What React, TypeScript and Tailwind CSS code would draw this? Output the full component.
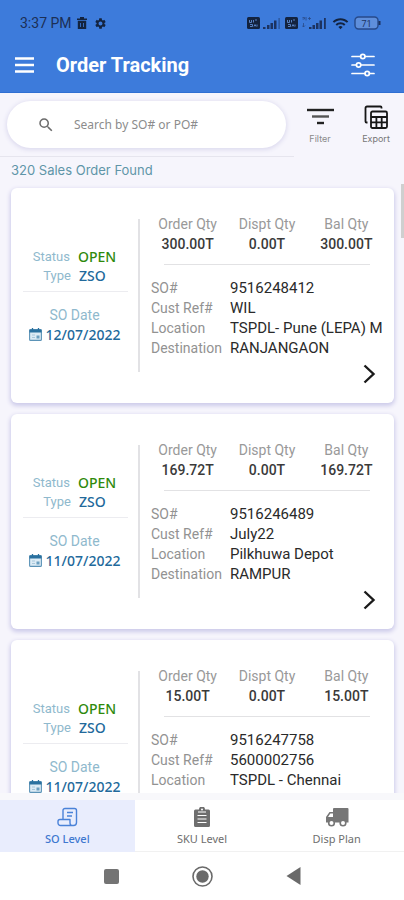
import React from 'react';
import { MdSearch, MdSettings, MdWifi } from 'react-icons/md';

const orders = [
  {
    status: 'OPEN',
    type: 'ZSO',
    date: '12/07/2022',
    orderQty: '300.00T',
    disptQty: '0.00T',
    balQty: '300.00T',
    so: '9516248412',
    custRef: 'WIL',
    location: 'TSPDL- Pune (LEPA) M',
    destination: 'RANJANGAON',
  },
  {
    status: 'OPEN',
    type: 'ZSO',
    date: '11/07/2022',
    orderQty: '169.72T',
    disptQty: '0.00T',
    balQty: '169.72T',
    so: '9516246489',
    custRef: 'July22',
    location: 'Pilkhuwa Depot',
    destination: 'RAMPUR',
  },
  {
    status: 'OPEN',
    type: 'ZSO',
    date: '11/07/2022',
    orderQty: '15.00T',
    disptQty: '0.00T',
    balQty: '15.00T',
    so: '9516247758',
    custRef: '5600002756',
    location: 'TSPDL - Chennai',
    destination: 'CHENNAI',
  },
];

type Order = (typeof orders)[number];

function SimBadge() {
  return (
    <svg className="w-[13px] h-3" viewBox="0 0 13 12">
      <rect width="13" height="12" rx="1.5" fill="#13233f" />
      <path d="M2.5 3v2.5h2V3M6.5 3v2.5M8 3h2M3 7.5h2.5v2H3M7 9.5l1-2 1 2M10 7.5v2" fill="none" stroke="#5f8bd0" strokeWidth="0.9" />
    </svg>
  );
}

function SignalBars() {
  return (
    <svg className="w-[18px] h-3" viewBox="0 0 18 12" fill="#1c3361">
      <rect x="0" y="10" width="2.5" height="2" />
      <rect x="4" y="8" width="2.5" height="4" />
      <rect x="7.5" y="6" width="2.5" height="6" />
      <rect x="11" y="3.5" width="2.5" height="8.5" />
      <rect x="15.5" y="1" width="1.2" height="11" opacity="0.6" />
    </svg>
  );
}

function StatusBar() {
  return (
    <div className="flex items-center h-[46px] pl-5 pr-[22px] text-[#1c2f55]">
      <span className="text-sm">3:37 PM</span>
      <svg className="ml-[5px] w-[10px] h-3" viewBox="0 0 10 12">
        <path d="M3 0h4v1.5h3V3H0V1.500h3zM.8 3.800h8.400V12H.8z" fill="#13233f" />
        <path d="M3.500 6v4M6.500 6v4" stroke="#3d7bdb" strokeWidth="0.8" />
      </svg>
      <MdSettings className="ml-[7px] w-[13px] h-[13px] text-[#13233f]" />
      <div className="flex items-center ml-auto">
        <SimBadge />
        <span className="ml-[3px]"><SignalBars /></span>
        <span className="ml-1"><SimBadge /></span>
        <svg className="ml-1 w-[25px] h-[14px]" viewBox="0 0 25 14" fill="#1c3361">
          <path d="M.5 1.500h2v1.500h-2M4 1v3.500M6 2.500h3M7.500 1v3M1.500 7v4M0 9.500l1.500 1.500L3 9.500" fill="none" stroke="#2a4a86" strokeWidth="0.8" />
          <rect x="7" y="11" width="2.500" height="2" />
          <rect x="10.500" y="9" width="2.500" height="4" />
          <rect x="14" y="7" width="2.500" height="6" />
          <rect x="17.500" y="4.500" width="2.500" height="8.500" />
          <rect x="22" y="2" width="1.800" height="11" />
        </svg>
        <MdWifi className="ml-1 w-[19px] h-[17px] text-[#13233f]" />
        <svg className="ml-1 w-7 h-[14px]" viewBox="0 0 28 14">
          <rect x="1" y="1" width="23" height="12" rx="3.500" fill="#5f8fdc" stroke="#274a8a" strokeWidth="1.400" />
          <path d="M25.500 5v4" stroke="#1c3361" strokeWidth="2" />
          <text x="12.500" y="10.500" textAnchor="middle" fontSize="9" fill="#1c3361">71</text>
        </svg>
      </div>
    </div>
  );
}

function SlidersIcon() {
  return (
    <svg className="w-6 h-6" viewBox="0 0 24 24" fill="none" stroke="white" strokeWidth="1.700" strokeLinecap="round">
      <path d="M1 3.500h8.500M14 3.500h9M1 12h4.500M10 12h13M1 20.500h13M18.500 20.500H23" />
      <circle cx="11.800" cy="3.500" r="2.200" />
      <circle cx="7.600" cy="12" r="2.200" />
      <circle cx="16.200" cy="20.500" r="2.200" />
    </svg>
  );
}

function ExportIcon() {
  return (
    <svg className="w-6 h-6" viewBox="0 0 24 24" fill="none" stroke="#161616" strokeWidth="1.800">
      <path d="M3.500 17.500H2.500a1 1 0 0 1-1-1V3a1.500 1.500 0 0 1 1.500-1.500h13.500a1 1 0 0 1 1 1v1" />
      <rect x="7" y="6.500" width="16" height="16.500" rx="1.500" />
      <path d="M7 12h16M7 17.400h16M12.400 12v11M17.700 12v11" />
    </svg>
  );
}

function CalendarIcon() {
  return (
    <svg className="w-[13px] h-[13px] shrink-0" viewBox="0 0 13 13">
      <rect x="0.600" y="1.600" width="11.800" height="10.800" rx="1" fill="#dcebf5" stroke="#5b93b7" strokeWidth="1.100" />
      <path d="M0.500 1.500h12V4.500h-12z" fill="#2a719f" />
      <path d="M3.500 0v2.500M9.500 0v2.500" stroke="#2a719f" strokeWidth="1.300" />
      <path d="M3 7h3M3 9.500h3" stroke="#a9c8db" />
      <rect x="7.500" y="7.500" width="3" height="3" fill="#6b9fc0" />
    </svg>
  );
}

function ScrollIcon() {
  return (
    <svg className="w-[21px] h-5" viewBox="0 0 21 20" fill="none" stroke="#4a82d8" strokeWidth="1.400" strokeLinejoin="round">
      <path d="M6 12.500V3.500a2 2 0 0 1 2-2h9.500a2 2 0 0 1 2 2v12a3 3 0 0 1-3 3H3.500a2.500 2.500 0 0 1-2.500-2.500v-1.500q0-2 2-2h10v3.500a2.500 2.500 0 0 0 3 2.500" />
      <path d="M10 5.500h6M10 9h5" />
    </svg>
  );
}

function ClipboardIcon() {
  return (
    <svg className="w-4 h-5" viewBox="0 0 16 20">
      <path d="M1.500 2.500H5a3 3 0 0 1 6 0h3.500A1.500 1.500 0 0 1 16 4v14.500a1.500 1.500 0 0 1-1.500 1.500h-13A1.500 1.500 0 0 1 0 18.500V4a1.500 1.500 0 0 1 1.500-1.500z" fill="#6e6e6e" />
      <path d="M4 5h8M3.500 8.500h9M3.500 12h9M3.500 15.500h9" stroke="white" strokeWidth="1.200" />
      <circle cx="8" cy="2.500" r="1" fill="white" />
    </svg>
  );
}

function TruckIcon() {
  return (
    <svg className="w-6 h-5" viewBox="0 0 24 20">
      <path d="M9 1h13.500a1 1 0 0 1 1 1v13.500H1V10l3.500-5H8V2a1 1 0 0 1 1-1z" fill="#767676" />
      <path d="M5.300 6.500H8V10H3z" fill="white" />
      <circle cx="6.500" cy="16" r="2.800" fill="white" stroke="#767676" strokeWidth="1.600" />
      <circle cx="18" cy="16" r="2.800" fill="white" stroke="#767676" strokeWidth="1.600" />
    </svg>
  );
}

function Qty({ label, value }: { label: string; value: string }) {
  return (
    <div className="text-center leading-5">
      <div className="text-[#999]">{label}</div>
      <div className="font-medium text-[#3a3a3a]">{value}</div>
    </div>
  );
}

function OrderCard({ order }: { order: Order }) {
  const details = [
    ['SO#', order.so],
    ['Cust Ref#', order.custRef],
    ['Location', order.location],
    ['Destination', order.destination],
  ];

  return (
    <article className="flex shrink-0 bg-white rounded-md shadow-[0_2px_4px_1px_#cdcbea] text-sm">
      <div className="flex flex-col justify-center w-[127px] shrink-0 leading-[19px]">
        <div className="flex justify-center gap-2">
          <span className="text-[13px] text-[#8fb9cd]">Status</span>
          <span className="font-['Noto_Sans',sans-serif] font-medium text-[#2f8a0c]">{order.status}</span>
        </div>
        <div className="flex justify-center gap-2">
          <span className="text-[13px] text-[#8fb9cd]">Type</span>
          <span className="font-['Noto_Sans',sans-serif] font-medium text-[#22699b]">{order.type}</span>
        </div>
        <hr className="mt-[6px] mb-[14px] ml-3 mr-2.5 border-[#ececf0]" />
        <div className="text-center text-[#8fb9cd]">SO Date</div>
        <div className="flex items-center justify-center gap-1">
          <CalendarIcon />
          <span className="font-['Noto_Sans',sans-serif] font-medium text-[#22699b]">{order.date}</span>
        </div>
      </div>
      <div className="w-0.5 my-[31px] bg-[#e2e2e5]" />
      <div className="flex flex-col flex-1 min-w-0 pt-[26px] pb-[19px] px-2">
        <div className="grid grid-cols-3">
          <Qty label="Order Qty" value={order.orderQty} />
          <Qty label="Dispt Qty" value={order.disptQty} />
          <Qty label="Bal Qty" value={order.balQty} />
        </div>
        <hr className="mt-2.5 mb-[13px] mx-4 border-[#e2e2e4]" />
        <dl className="grid grid-cols-[79px_1fr] ml-[3px] leading-5">
          {details.map(([label, value]) => (
            <React.Fragment key={label}>
              <dt className="text-[#929292]">{label}</dt>
              <dd className="text-[15px] text-[#2a2a2a] whitespace-nowrap">{value}</dd>
            </React.Fragment>
          ))}
        </dl>
        <button type="button" aria-label="Open order" className="self-end mt-1.5 mr-2.5">
          <svg className="w-[14px] h-5" viewBox="0 0 14 20" fill="none" stroke="#1a1a1a" strokeWidth="2.400">
            <path d="M2.500 1.500L11.500 10l-9 8.500" />
          </svg>
        </button>
      </div>
    </article>
  );
}

const tabs = [
  { label: 'SO Level', icon: <ScrollIcon />, active: true },
  { label: 'SKU Level', icon: <ClipboardIcon />, active: false },
  { label: 'Disp Plan', icon: <TruckIcon />, active: false },
];

export default function App() {
  return (
    <div className="flex flex-col h-screen overflow-hidden bg-[#f6f5fc] font-['Roboto',sans-serif]">
      <header className="shrink-0 bg-[#3d7bdb] border-b border-[#2f6fd2]">
        <StatusBar />
        <div className="flex items-center h-[46px] pl-[15px] pr-[29px] pb-2">
          <button type="button" aria-label="Menu">
            <svg className="w-[19px] h-4" viewBox="0 0 19 16" stroke="white" strokeWidth="2.400">
              <path d="M0 1.500h19M0 8h19M0 14.500h19" />
            </svg>
          </button>
          <h1 className="ml-[22px] text-xl font-bold text-white">Order Tracking</h1>
          <button type="button" aria-label="Settings" className="ml-auto">
            <SlidersIcon />
          </button>
        </div>
      </header>

      <div className="flex shrink-0 pl-[7px] pr-3 pt-2">
        <label className="flex items-center flex-1 min-w-0 h-[47px] pl-[30px] pr-4 bg-white rounded-full shadow-[0_1px_4px_1px_#dddbef]">
          <MdSearch className="w-[18px] h-[18px] shrink-0 text-[#6b6b6b]" />
          <input
            type="text"
            aria-label="Search orders"
            placeholder="Search by SO# or PO#"
            className="flex-1 min-w-0 ml-[19px] text-xs font-['Noto_Sans',sans-serif] outline-none placeholder:text-[#8c8c8c]"
          />
        </label>
        <button type="button" className="flex flex-col items-center w-8 ml-[18px] pt-1 text-[9px] leading-3 text-[#8a8a8a] font-['Inter',sans-serif]">
          <svg className="w-[27px] h-6" viewBox="0 0 27 24" stroke="#222" strokeWidth="2.400">
            <path d="M0 5h27" />
            <path d="M5 11.500h17" stroke="#555" />
            <path d="M10 18h7" />
          </svg>
          <span className="mt-1">Filter</span>
        </button>
        <button type="button" className="flex flex-col items-center w-8 ml-6 pt-1 text-[9px] leading-3 text-[#777] font-['Inter',sans-serif]">
          <ExportIcon />
          <span className="mt-1">Export</span>
        </button>
      </div>

      <p className="shrink-0 mt-2 mr-[110px] pl-[11px] border-t border-[#e6e5ee] text-[13px] leading-[27px] font-['Inter',sans-serif] text-[#5f95a8]">
        320 Sales Order Found
      </p>

      <main className="relative flex-1 min-h-0">
        <div className="flex flex-col gap-[11px] h-full pt-1 pl-[11px] pr-2.5 overflow-y-auto [scrollbar-width:none]">
          {orders.map((order) => (
            <OrderCard key={order.so} order={order} />
          ))}
        </div>
        <div className="absolute top-0 right-0 w-[3px] h-[54px] bg-[#cfcfcf]" />
      </main>

      <nav className="grid grid-cols-3 shrink-0 border-t-[7px] border-[#f8f8fb] bg-white">
        {tabs.map((tab) => (
          <button
            key={tab.label}
            type="button"
            className={`flex flex-col items-center h-[52px] pt-[7px] text-[11px] font-['Noto_Sans',sans-serif] ${
              tab.active ? 'bg-[#e9edfd] font-medium text-[#3f78d0]' : 'border-b border-[#f1f1f1] text-[#6e6e6e]'
            }`}
          >
            {tab.icon}
            <span className="mt-1 leading-4">{tab.label}</span>
          </button>
        ))}
      </nav>

      {/* android system buttons */}
      <div className="flex items-center justify-center gap-[73px] shrink-0 h-12 bg-white">
        <button type="button" aria-label="Recent apps" className="w-[15px] h-[15px] rounded-xs bg-[#747474]" />
        <button type="button" aria-label="Home">
          <svg className="w-[21px] h-[21px]" viewBox="0 0 21 21">
            <circle cx="10.500" cy="10.500" r="9.500" fill="none" stroke="#6a6a6a" strokeWidth="1.600" />
            <circle cx="10.500" cy="10.500" r="6.200" fill="#6a6a6a" />
          </svg>
        </button>
        <button type="button" aria-label="Back">
          <svg className="w-[15px] h-[18px]" viewBox="0 0 15 18">
            <path d="M14.500 0v18L0.500 9z" fill="#6a6a6a" />
          </svg>
        </button>
      </div>
    </div>
  );
}
